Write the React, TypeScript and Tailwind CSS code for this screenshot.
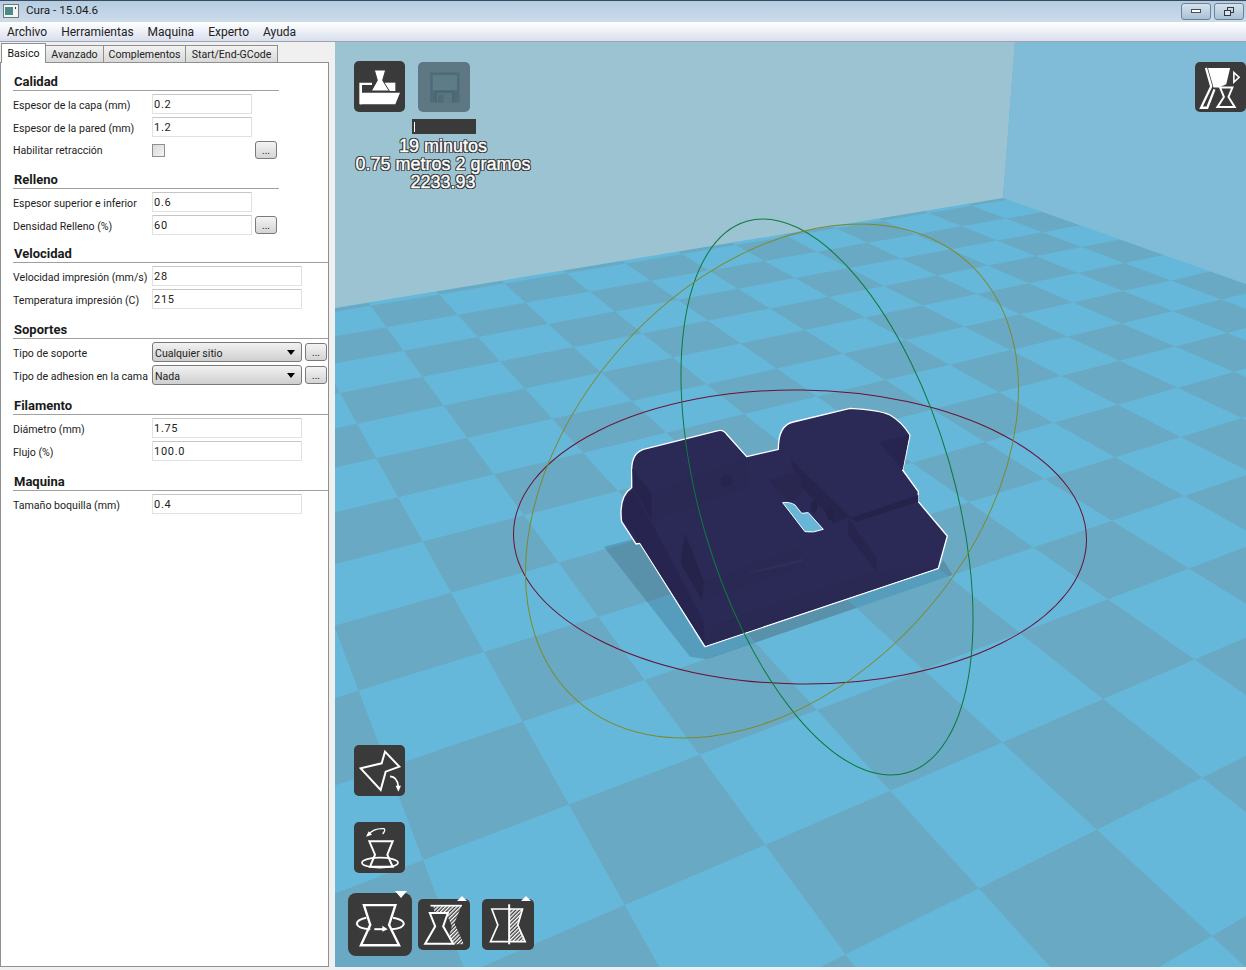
import React from 'react';

const FONT = "font-['Roboto',sans-serif]";

// floor homography, fitted on the wall corner and the two vanishing points
const O = { x: 1003, y: 198 };
const VA = { x: 3050, y: -140 };
const VB = { x: 42, y: -143 };
const A = -0.01994;
const B = -0.03447;
const U_OFF = 0.868;
const V_OFF = 0.15;

const project = (u: number, v: number) => {
  const s = A * u;
  const t = B * v;
  const w = 1 + s + t;
  return {
    x: (s * VA.x + t * VB.x + O.x) / w,
    y: (s * VA.y + t * VB.y + O.y) / w,
    w,
  };
};

const floorPath = () => {
  let d = '';
  for (let i = -1; i < 52; i++) {
    for (let j = -1; j < 30; j++) {
      if ((i + j + 2) % 2 !== 0) continue;
      const u0 = Math.max(0, i + U_OFF);
      const u1 = i + 1 + U_OFF;
      const v0 = Math.max(0, j + V_OFF);
      const v1 = j + 1 + V_OFF;
      const pts = [
        project(u0, v0),
        project(u1, v0),
        project(u1, v1),
        project(u0, v1),
      ];
      if (pts.some((p) => p.w < 0.03)) continue;
      d += `M${pts.map((p) => `${p.x.toFixed(1)},${p.y.toFixed(1)}`).join('L')}Z`;
    }
  }
  return d;
};

const orbit = (sx: number, sy: number, sxy: number) => {
  const a = sx * sx;
  const b = sy * sy;
  const root = Math.sqrt(((a - b) / 2) ** 2 + sxy ** 2);
  return {
    rx: Math.sqrt((a + b) / 2 + root),
    ry: Math.sqrt((a + b) / 2 - root),
    angle: (Math.atan2(2 * sxy, a - b) * 90) / Math.PI,
  };
};

const rings = [
  { cx: 800, cy: 537, color: '#6a1235', ...orbit(286.5, 147, 715) },
  { cx: 827, cy: 497, color: '#0c7a3c', ...orbit(146, 278, 17792) },
  { cx: 772, cy: 481, color: '#7d8a2c', ...orbit(246.5, 257, -22616) },
];

const Scene = () => (
  <svg
    className="absolute inset-0"
    width={911}
    height={925}
    viewBox="335 42 911 925"
  >
    <rect x={335} y={42} width={911} height={925} fill="#66b8da" />
    <path d={floorPath()} fill="#69a9c3" />
    <polygon points="335,42 1015,42 1003,198 335,308" fill="#9cc3d2" />
    <polygon points="1015,42 1246,42 1246,284 1003,198" fill="#80bcd7" />
    <g transform="translate(590 390) scale(0.3333)">
      <path
        d="M42,470L140,445L340,770L1045,535L1060,510L1088,555L350,808L300,800Z"
        fill="#1e3c50"
        fillOpacity={0.22}
      />
      <path
        d="M345,770L150,460L138,462L95,395Q85,320 125,293L125,240Q125,190 160,178L385,122Q400,118 412,135L470,200L565,178Q565,105 610,96L780,55Q870,60 900,75Q935,95 960,135L938,240L985,305L985,335L1072,438L1045,535Z"
        fill="#2b2a57"
        stroke="#ffffff"
        strokeWidth={4}
        strokeLinejoin="round"
      />
      {/* side faces and steps of the part */}
      <path d="M98,392Q90,330 128,297L180,390L340,690L345,765L150,458Z" fill="#272550" />
      <path d="M127,235L185,310L185,390L130,295Z" fill="#26244c" />
      <path d="M185,310L465,205L478,290L330,340L185,390Z" fill="#2a2954" />
      <circle cx={410} cy={272} r={18} fill="#262450" />
      <path d="M345,768L370,705L855,545L1040,535Z" fill="#2a2953" />
      <path d="M340,575L640,470L645,530L338,628Z" fill="#2a2954" />
      <path d="M480,545L640,505L640,515L480,552Z" fill="#2e2d5c" />
      <path d="M272,520L285,430L342,575L335,630Z" fill="#252349" />
      <path d="M600,205L635,240L780,380L730,400L700,360L625,280Z" fill="#26244c" />
      <ellipse cx={672} cy={350} rx={10} ry={18} fill="#242247" />
      <ellipse cx={720} cy={370} rx={10} ry={20} fill="#242247" />
      <path d="M775,385V435L860,545V505Z" fill="#27254d" />
      <path d="M865,155L958,137L938,240Z" fill="#272550" />
      <path d="M780,385L985,315L985,335L800,395Z" fill="#25234a" />
      <path d="M535,270L625,245L640,300L600,340Z" fill="#29274f" />
      <path
        d="M578,338Q600,335 615,345L635,370L655,368L700,418Q670,430 645,425Z"
        fill="#67b6d8"
        stroke="#ffffff"
        strokeWidth={3}
      />
    </g>
    {rings.map((ring) => (
      <ellipse
        key={ring.color}
        cx={ring.cx}
        cy={ring.cy}
        rx={ring.rx}
        ry={ring.ry}
        transform={`rotate(${ring.angle} ${ring.cx} ${ring.cy})`}
        fill="none"
        stroke={ring.color}
        strokeWidth={1}
      />
    ))}
  </svg>
);

const Hatch = ({ id }: { id: string }) => (
  <pattern
    id={id}
    width={8}
    height={8}
    patternUnits="userSpaceOnUse"
    patternTransform="rotate(45)"
  >
    <rect width={8} height={8} fill="#3a3a3a" />
    <rect width={4} height={8} fill="#ffffff" />
  </pattern>
);

const LoadIcon = () => (
  <svg viewBox="0 0 153 153" className="h-full w-full">
    <path d="M16,130V65H54V72H24V130Z" fill="#fff" />
    <path d="M92,65H124V90H92Z" fill="#fff" />
    <path d="M18,95H138L124,130H18Z" fill="#fff" />
    <path d="M61,27H95L86,58L106,90H52L70,58Z" fill="#fff" stroke="#3a3a3a" strokeWidth={3} />
  </svg>
);

const SaveIcon = () => (
  <svg viewBox="0 0 153 153" className="h-full w-full">
    <path d="M34,32H124V124H34Z" fill="#4f6b77" />
    <rect x={42} y={40} width={74} height={46} fill="#5e7c88" />
    <path d="M52,124V92H104V124" fill="#587581" stroke="#445f6a" strokeWidth={3} />
    <rect x={58} y={100} width={16} height={24} fill="#4f6b77" />
  </svg>
);

const ViewIcon = () => (
  <svg viewBox="0 0 153 153" className="h-full w-full">
    <path d="M38,18H106L94,68L72,78H55Z" fill="#fff" />
    <path d="M32,18L48,75L17,140H36L58,84" fill="none" stroke="#fff" strokeWidth={7} />
    <path d="M75,78H113L101,107L120,138H67L87,107Z" fill="#3a3a3a" stroke="#fff" strokeWidth={6} />
    <path d="M115,27L137,47L115,67Z" fill="#fff" />
    <path d="M120,38L130,47L120,56Z" fill="#3a3a3a" />
  </svg>
);

const RotateIcon = () => (
  <svg viewBox="0 0 153 153" className="h-full w-full">
    <path d="M93,20L136,65L95,80L80,135L20,70L83,55Z" fill="none" stroke="#fff" strokeWidth={6} />
    <path d="M108,94Q130,95 133,125" fill="none" stroke="#fff" strokeWidth={5} />
    <path d="M125,122H141L133,140Z" fill="#fff" />
  </svg>
);

const ScaleIcon = () => (
  <svg viewBox="0 0 153 153" className="h-full w-full">
    <path d="M46,58H116L100,98L116,134H48L63,98Z" fill="none" stroke="#fff" strokeWidth={6} />
    <ellipse cx={78} cy={122} rx={54} ry={15} fill="none" stroke="#fff" strokeWidth={5} />
    <path d="M44,38Q58,18 90,20Q96,24 86,36" fill="none" stroke="#fff" strokeWidth={4} />
    <path d="M36,44L54,38L44,28Z" fill="#fff" />
  </svg>
);

const TurnIcon = () => (
  <svg viewBox="0 0 190 188" className="h-full w-full">
    <path d="M47,36H141L122,95L152,156H38L66,95Z" fill="none" stroke="#fff" strokeWidth={7} />
    <path d="M54,74Q26,80 26,92Q28,106 66,108" fill="none" stroke="#fff" strokeWidth={6} />
    <path d="M134,74Q166,80 166,92Q164,106 130,108" fill="none" stroke="#fff" strokeWidth={6} />
    <path d="M78,108H106" stroke="#fff" strokeWidth={6} />
    <path d="M102,98L118,108L102,116Z" fill="#fff" />
  </svg>
);

const UniformIcon = () => (
  <svg viewBox="0 0 153 153" className="h-full w-full">
    <defs>
      <Hatch id="hatch-a" />
    </defs>
    <path d="M44,18H130L108,72L136,136H85L100,82L82,40H48Z" fill="url(#hatch-a)" />
    <path d="M34,42H88L74,82L104,134H20L50,82Z" fill="#3a3a3a" stroke="#fff" strokeWidth={6} />
    <path d="M36,20H130" stroke="#fff" strokeWidth={5} />
  </svg>
);

const MirrorIcon = () => (
  <svg viewBox="0 0 153 153" className="h-full w-full">
    <defs>
      <Hatch id="hatch-b" />
    </defs>
    <path d="M80,30H120L106,78L128,128H80Z" fill="url(#hatch-b)" />
    <path d="M28,30H120L106,78L128,128H24L46,78Z" fill="none" stroke="#fff" strokeWidth={5} />
    <path d="M80,16V136" stroke="#fff" strokeWidth={6} />
  </svg>
);

type ToolProps = {
  className: string;
  children: React.ReactNode;
  arrow?: string;
};

const Tool = ({ className, children, arrow }: ToolProps) => (
  <div className={`absolute bg-[#3a3a3a] rounded-[5px] ${className}`}>
    {children}
    {arrow && <div className={`absolute ${arrow}`} />}
  </div>
);

const Overlay = () => (
  <>
    <Tool className="left-[19px] top-[19px] h-[51px] w-[51px]">
      <LoadIcon />
    </Tool>
    <Tool className="left-[83px] top-[20px] h-[50px] w-[52px] !bg-[#5d7883]">
      <SaveIcon />
    </Tool>
    <div className="absolute left-[77px] top-[77px] flex h-[15px] w-[64px] items-center bg-[#3a3a3a] pl-[2px]">
      <div className="h-[10px] w-px bg-white" />
    </div>
    <div className="absolute left-[0px] top-[95px] flex w-[216px] flex-col items-center text-white font-['Liberation_Sans',sans-serif] text-[18px] leading-[18px] [-webkit-text-stroke:0.4px_white] [text-shadow:1px_0_#333,-1px_0_#333,0_1px_#333,0_-1px_#333,1px_1px_#333,-1px_-1px_#333,1px_-1px_#333,-1px_1px_#333]">
      <span>19 minutos</span>
      <span>0.75 metros 2 gramos</span>
      <span>2233.93</span>
    </div>
    <Tool className="left-[860px] top-[20px] h-[50px] w-[51px]">
      <ViewIcon />
    </Tool>
    <Tool className="left-[19px] top-[703px] h-[51px] w-[51px]">
      <RotateIcon />
    </Tool>
    <Tool className="left-[19px] top-[780px] h-[51px] w-[51px]">
      <ScaleIcon />
    </Tool>
    <Tool
      className="left-[13px] top-[851px] h-[63px] w-[64px] rounded-[8px]"
      arrow="right-[5px] top-[-2px] h-0 w-0 border-x-[6px] border-t-[7px] border-x-transparent border-t-white"
    >
      <TurnIcon />
    </Tool>
    <Tool
      className="left-[83px] top-[857px] h-[51px] w-[52px]"
      arrow="right-[3px] top-[-3px] h-0 w-0 border-x-[5px] border-b-[5px] border-x-transparent border-b-white"
    >
      <UniformIcon />
    </Tool>
    <Tool
      className="left-[147px] top-[857px] h-[51px] w-[52px]"
      arrow="right-[3px] top-[-3px] h-0 w-0 border-x-[5px] border-b-[5px] border-x-transparent border-b-white"
    >
      <MirrorIcon />
    </Tool>
  </>
);

const DotsButton = () => (
  <div className="ml-[3px] flex h-[18px] w-[22px] items-end justify-center rounded-[3px] border border-[#7a7a7a] bg-gradient-to-b from-[#f4f4f4] to-[#d4d4d4] pb-[2px] text-[10px] leading-[10px] text-[#222]">
    ...
  </div>
);

type FieldProps = {
  label: string;
  value: string;
  width: string;
  dots?: boolean;
};

const Field = ({ label, value, width, dots }: FieldProps) => (
  <div className="flex h-5 items-center">
    <span className="w-[139px] whitespace-nowrap pt-[4px] text-[#1c1c1c]">{label}</span>
    <input
      readOnly
      value={value}
      className={`h-5 ${width} rounded-[1px] border border-[#dfe1e6] border-t-[#c4c6cc] bg-white px-[1px] pt-[2px] text-[11px] tracking-[0.7px] text-[#222] outline-none`}
    />
    {dots && <DotsButton />}
  </div>
);

const SelectField = ({ label, value }: { label: string; value: string }) => (
  <div className="flex h-5 items-center">
    <span className="w-[139px] whitespace-nowrap pt-[4px] text-[#1c1c1c]">{label}</span>
    <div className="flex h-5 w-[150px] items-center justify-between rounded-[3px] border border-[#7a7a7a] bg-gradient-to-b from-[#f2f2f2] to-[#cfcfcf] pl-[2px] pr-[6px] text-[#1c1c1c]">
      <span className="pt-[3px]">{value}</span>
      <div className="h-0 w-0 border-x-[4px] border-t-[5px] border-x-transparent border-t-black" />
    </div>
    <DotsButton />
  </div>
);

type SectionProps = {
  title: string;
  className: string;
  children: React.ReactNode;
};

const Section = ({ title, className, children }: SectionProps) => (
  <section className={className}>
    <h2 className="h-[18px] border-b border-[#a0a0a0] pl-px text-[13px] font-bold leading-[17px] text-[#1a1a1a]">
      {title}
    </h2>
    <div className="mt-[3px] flex flex-col gap-[3px]">{children}</div>
  </section>
);

const tabs = [
  { name: 'Avanzado', width: 'w-[58px]' },
  { name: 'Complementos', width: 'w-[82px]' },
  { name: 'Start/End-GCode', width: 'w-[92px]' },
];

const SettingsPanel = () => (
  <aside className="w-[335px] shrink-0 bg-[#f0f0f0]">
    <div className="relative z-10 flex h-[20px] items-end text-[10.6px]">
      <div className="ml-px -mb-px flex h-[20px] w-[45px] items-center justify-center border border-b-0 border-[#8e8f8f] bg-white text-[#111]">
        Basico
      </div>
      {tabs.map((tab) => (
        <div
          key={tab.name}
          className={`flex h-[17px] ${tab.width} items-center justify-center border border-l-0 border-b-0 border-[#8e8f8f] bg-gradient-to-b from-[#f2f2f2] to-[#d9d9d9] pt-px text-[#222]`}
        >
          {tab.name}
        </div>
      ))}
    </div>
    <div className="h-[905px] w-[329px] border border-[#8e8f8f] bg-white pl-[12px] text-[10.6px] leading-5">
      <Section title="Calidad" className="mt-[10px] w-[266px]">
        <Field label="Espesor de la capa (mm)" value="0.2" width="w-[100px]" />
        <Field label="Espesor de la pared (mm)" value="1.2" width="w-[100px]" />
        <div className="flex h-5 items-center">
          <span className="w-[139px] whitespace-nowrap pt-[2px] text-[#1c1c1c]">Habilitar retracción</span>
          <div className="h-[13px] w-[13px] border border-[#8e8f8f] bg-gradient-to-br from-[#d8d8d8] to-[#f4f4f4]" />
          <div className="ml-[87px]">
            <DotsButton />
          </div>
        </div>
      </Section>
      <Section title="Relleno" className="mt-[11px] w-[266px]">
        <Field label="Espesor superior e inferior" value="0.6" width="w-[100px]" />
        <Field label="Densidad Relleno (%)" value="60" width="w-[100px]" dots />
      </Section>
      <Section title="Velocidad" className="mt-[10px] w-[315px]">
        <Field label="Velocidad impresión (mm/s)" value="28" width="w-[150px]" />
        <Field label="Temperatura impresión (C)" value="215" width="w-[150px]" />
      </Section>
      <Section title="Soportes" className="mt-[12px] w-[315px]">
        <SelectField label="Tipo de soporte" value="Cualquier sitio" />
        <SelectField label="Tipo de adhesion en la cama" value="Nada" />
      </Section>
      <Section title="Filamento" className="mt-[12px] w-[315px]">
        <Field label="Diámetro (mm)" value="1.75" width="w-[150px]" />
        <Field label="Flujo (%)" value="100.0" width="w-[150px]" />
      </Section>
      <Section title="Maquina" className="mt-[12px] w-[315px]">
        <Field label="Tamaño boquilla (mm)" value="0.4" width="w-[150px]" />
      </Section>
    </div>
  </aside>
);

const menus = ['Archivo', 'Herramientas', 'Maquina', 'Experto', 'Ayuda'];

export default function App() {
  return (
    <div className={`flex h-[970px] w-[1246px] flex-col overflow-hidden bg-[#f0f0f0] ${FONT}`}>
      <header className="flex h-[22px] items-center border-t border-[#3c4a58] bg-gradient-to-b from-[#b4cde2] to-[#cddcea] pb-px pl-[3px] text-[11.7px] text-[#1a1a1a]">
        <svg width={16} height={14} viewBox="0 0 16 14" className="mr-[7px]">
          <rect x={0.5} y={0.5} width={15} height={13} fill="#f4f4f4" stroke="#777" />
          <rect x={2} y={3} width={8} height={8} fill="#4c8a8a" />
          <rect x={12} y={3} width={1} height={2} fill="#333" />
        </svg>
        <span>Cura - 15.04.6</span>
        <div className="ml-auto mr-[2px] flex gap-[3px]">
          <div className="flex h-[17px] w-[30px] items-center justify-center rounded-[3px] border border-[#6d8296] bg-gradient-to-b from-[#d6e3ee] to-[#a9c0d4]">
            <div className="h-[4px] w-[10px] border border-[#44505c] bg-white" />
          </div>
          <div className="flex h-[17px] w-[30px] items-center justify-center rounded-[3px] border border-[#6d8296] bg-gradient-to-b from-[#d6e3ee] to-[#a9c0d4]">
            <svg width={12} height={11} viewBox="0 0 12 11" fill="none" stroke="#2f3a44">
              <rect x={4.5} y={1.5} width={6} height={5} />
              <rect x={1.5} y={4.5} width={6} height={5} fill="#d6e3ee" />
            </svg>
          </div>
        </div>
      </header>
      <nav className="flex h-[20px] items-center gap-[14px] border-b border-[#a0a4ac] bg-gradient-to-b from-[#ffffff] to-[#d9dfee] pl-[7px] text-[12px] text-[#222]">
        {menus.map((menu) => (
          <span key={menu}>{menu}</span>
        ))}
      </nav>
      <div className="flex flex-1">
        <SettingsPanel />
        <main className="relative mb-[3px] flex-1 overflow-hidden">
          <Scene />
          <Overlay />
        </main>
      </div>
    </div>
  );
}
